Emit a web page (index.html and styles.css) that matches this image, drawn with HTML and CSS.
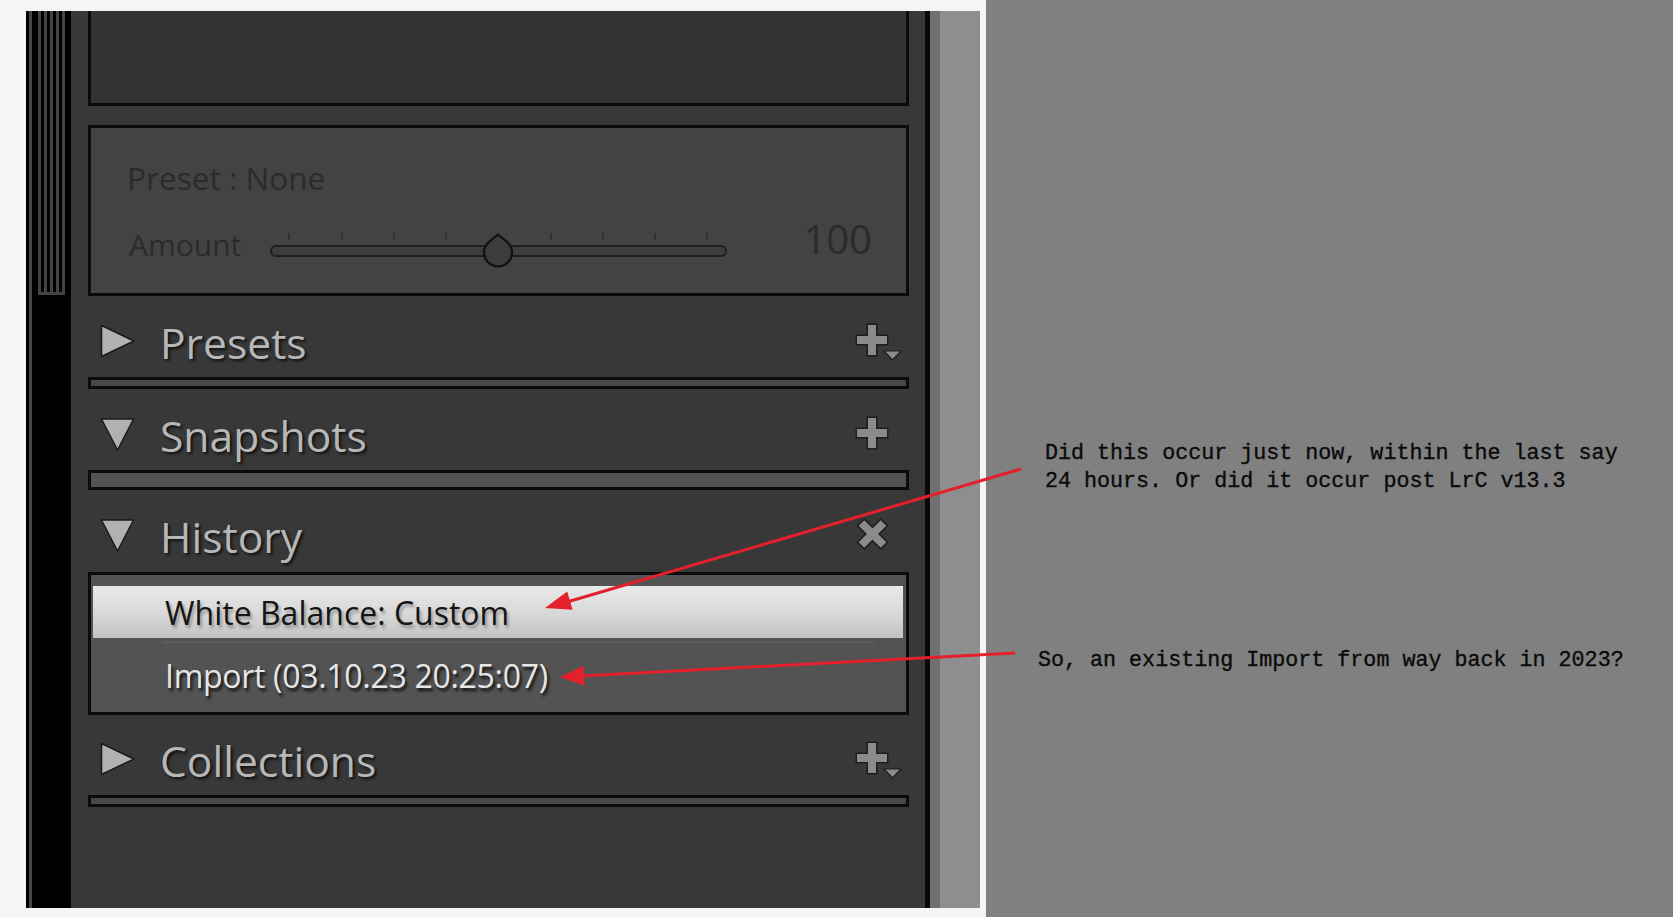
FILE: index.html
```html
<!DOCTYPE html>
<html lang="en">
<head>
<meta charset="utf-8">
<title>Lightroom History panel</title>
<link rel="stylesheet" href="styles.css">
</head>
<body>
<div class="page">
  <div class="shot-area">
    <div class="shot">
      <div class="strip">
        <div class="strip-line"></div>
        <div class="strip-grip"></div>
      </div>
      <div class="panel">
        <div class="topbox"></div>
        <div class="presetbox">
          <div class="preset-name">Preset : None</div>
          <div class="amount-row">
            <div class="amount-label">Amount</div>
            <div class="slider">
              <div class="ticks"><span></span><span></span><span></span><span></span><span></span><span></span><span></span><span></span><span></span></div>
              <div class="track"></div>
              <svg class="thumb" width="36" height="36" viewBox="0 0 36 36"><path d="M17 1.5 L25.8 8.6 A14 14 0 1 1 8.2 8.6 Z" fill="#3c3c3c" stroke="#111" stroke-width="2.2" stroke-linejoin="round"/></svg>
            </div>
            <div class="amount-value">100</div>
          </div>
        </div>

        <div class="header">
          <svg class="tri" width="36" height="36" viewBox="0 0 36 36"><polygon points="1.5,1.5 34,17 1.5,32.5" fill="#b1b1b1" stroke="#1a1a1a" stroke-width="1.5" stroke-linejoin="round"/></svg>
          <span class="title">Presets</span>
          <svg class="icon" width="48" height="40" viewBox="0 0 48 40"><path d="M18 1.5 V34.5 M1.5 18 H34.5" stroke="#1d1d1d" stroke-width="11"/><path d="M18 3 V33 M3 18 H33" stroke="#8b8b8b" stroke-width="8"/><polygon points="30,29 47,29 38.5,38" fill="#8b8b8b" stroke="#1d1d1d" stroke-width="1.2" stroke-linejoin="round"/></svg>
        </div>
        <div class="bar"></div>

        <div class="header">
          <svg class="tri" width="36" height="36" viewBox="0 0 36 36"><polygon points="1.5,2 33.5,2 17.5,33" fill="#b1b1b1" stroke="#1a1a1a" stroke-width="1.5" stroke-linejoin="round"/></svg>
          <span class="title">Snapshots</span>
          <svg class="icon" width="48" height="40" viewBox="0 0 48 40"><path d="M18 1.5 V34.5 M1.5 18 H34.5" stroke="#1d1d1d" stroke-width="11"/><path d="M18 3 V33 M3 18 H33" stroke="#8b8b8b" stroke-width="8"/></svg>
        </div>
        <div class="bar bar-thick"></div>

        <div class="header header-history">
          <svg class="tri" width="36" height="36" viewBox="0 0 36 36"><polygon points="1.5,2 33.5,2 17.5,33" fill="#b1b1b1" stroke="#1a1a1a" stroke-width="1.5" stroke-linejoin="round"/></svg>
          <span class="title">History</span>
          <svg class="icon" width="48" height="40" viewBox="0 0 48 40"><path d="M6.4 5.9 L30.6 30.1 M30.6 5.9 L6.4 30.1" stroke="#1d1d1d" stroke-width="11"/><path d="M7.5 7 L29.5 29 M29.5 7 L7.5 29" stroke="#8b8b8b" stroke-width="8"/></svg>
        </div>
        <div class="history">
          <div class="hist-item hist-selected">White Balance: Custom</div>
          <div class="hist-item hist-import"><div class="hist-inner">Import (03.10.23 20:25:07)</div></div>
        </div>

        <div class="header header-collections">
          <svg class="tri" width="36" height="36" viewBox="0 0 36 36"><polygon points="1.5,1.5 34,17 1.5,32.5" fill="#b1b1b1" stroke="#1a1a1a" stroke-width="1.5" stroke-linejoin="round"/></svg>
          <span class="title">Collections</span>
          <svg class="icon" width="48" height="40" viewBox="0 0 48 40"><path d="M18 1.5 V34.5 M1.5 18 H34.5" stroke="#1d1d1d" stroke-width="11"/><path d="M18 3 V33 M3 18 H33" stroke="#8b8b8b" stroke-width="8"/><polygon points="30,29 47,29 38.5,38" fill="#8b8b8b" stroke="#1d1d1d" stroke-width="1.2" stroke-linejoin="round"/></svg>
        </div>
        <div class="bar"></div>
      </div>
      <div class="edge-dark"></div>
      <div class="edge-mid"></div>
      <div class="edge-light"></div>
    </div>
  </div>

  <div class="notes">
    <p class="note note-first">Did this occur just now, within the last say
24 hours. Or did it occur post LrC v13.3</p>
    <p class="note note-second">So, an existing Import from way back in 2023?</p>
  </div>

  <svg class="arrows" width="1673" height="917" viewBox="0 0 1673 917">
    <line x1="1021" y1="469" x2="567" y2="602" stroke="#e3202b" stroke-width="3"/>
    <polygon points="545,608 572.6,609.8 567.2,591.6" fill="#e3202b"/>
    <line x1="1015" y1="653" x2="582" y2="676" stroke="#e3202b" stroke-width="3"/>
    <polygon points="560,677 584.5,685.7 583.5,665.7" fill="#e3202b"/>
  </svg>
</div>
</body>
</html>
```

FILE: styles.css
```css
* { box-sizing: border-box; }

html, body {
  margin: 0;
  padding: 0;
  width: 1673px;
  height: 917px;
  overflow: hidden;
  background: #808080;
}

.page {
  position: relative;
  display: flex;
  width: 1673px;
  height: 917px;
  font-family: "Open Sans", "Noto Sans", sans-serif;
}

.shot-area {
  width: 986px;
  height: 917px;
  background: #f5f5f5;
  padding: 11px 6px 9px 26px;
}

.shot {
  display: flex;
  height: 897px;
}

/* left filmstrip grip */
.strip {
  width: 45px;
  background: #000;
  display: flex;
  align-items: flex-start;
  padding-left: 3px;
}
.strip-line {
  width: 3px;
  height: 100%;
  background: #454545;
}
.strip-grip {
  margin-left: 6px;
  width: 27px;
  height: 284px;
  background: repeating-linear-gradient(to right, #434343 0 3px, #000 3px 6px);
  border-bottom: 3px solid #434343;
}

/* main panel */
.panel {
  width: 854px;
  background: #383838;
  padding: 0 16px 0 17px;
  display: flex;
  flex-direction: column;
}

.topbox {
  height: 95px;
  background: #333;
  border: 3px solid #0b0b0b;
  border-top: none;
}

.presetbox {
  margin-top: 19px;
  height: 171px;
  background: #434343;
  border: 3px solid #0b0b0b;
  padding: 34px 34px 0 36px;
  color: #2b2b2b;
}
.preset-name {
  font-size: 31.6px;
  line-height: 31px;
}
.amount-row {
  display: flex;
  align-items: flex-start;
  margin-top: 35px;
  margin-left: 2px;
}
.amount-label {
  font-size: 30px;
  line-height: 30px;
  margin-top: 2px;
}
.slider {
  position: relative;
  width: 457px;
  height: 36px;
  margin-left: 29px;
  margin-top: 5px;
}
.ticks {
  display: flex;
  justify-content: space-between;
  padding: 0 19px 0 18px;
  height: 7px;
}
.ticks span {
  width: 2px;
  height: 7px;
  background: #303030;
}
.track {
  margin-top: 5px;
  height: 12px;
  border: 2px solid #1e1e1e;
  border-radius: 6px;
  background: #3d3d3d;
}
.thumb {
  position: absolute;
  left: 211px;
  top: 0;
}
.amount-value {
  margin-left: auto;
  font-size: 40px;
  line-height: 40px;
  margin-top: -9px;
}

/* section headers */
.header {
  height: 81px;
  display: flex;
  align-items: center;
  padding: 10px 7px 0 12px;
}
.header-history { height: 82px; }
.header-collections { height: 80px; }
.tri { flex: none; }
.title {
  margin-left: 24px;
  font-size: 42.6px;
  line-height: 42px;
  color: #b7b7b7;
  text-shadow: 2px 2px 3px rgba(0, 0, 0, 0.75);
}
.icon {
  margin-left: auto;
  flex: none;
}

.bar {
  height: 12px;
  background: #484848;
  border: 3px solid #0b0b0b;
}
.bar-thick {
  height: 20px;
  background: #525252;
}

/* history list */
.history {
  height: 143px;
  background: #535353;
  border: 3px solid #0b0b0b;
  padding: 11px 3px 0 2px;
}
.hist-item {
  font-size: 32px;
  white-space: nowrap;
}
.hist-selected {
  height: 52px;
  line-height: 54px;
  padding-left: 72px;
  color: #151515;
  background: linear-gradient(to bottom, #e9e9e9 0%, #d6d6d6 60%, #c2c2c2 100%);
  text-shadow: 2px 3px 3px rgba(0, 0, 0, 0.3);
}
.hist-import {
  height: 74px;
  padding: 3px 28px 0 70px;
}
.hist-inner {
  border-top: 2px solid #5c5c5c;
  line-height: 66px;
  padding-left: 2px;
  letter-spacing: -0.3px;
  color: #e6e6e6;
  text-shadow: 2px 3px 3px rgba(0, 0, 0, 0.8);
}

/* right edge of the screenshot */
.edge-dark { width: 5px; background: #0a0a0a; }
.edge-mid { width: 10px; background: #707070; }
.edge-light { width: 40px; background: #8e8e8e; }

/* annotations */
.notes {
  flex: 1;
  background: #808080;
  padding-top: 440px;
}
.note {
  margin: 0;
  font-family: "Liberation Mono", "DejaVu Sans Mono", monospace;
  font-size: 21.7px;
  line-height: 28px;
  color: #0a0a0a;
  white-space: pre;
  -webkit-text-stroke: 0.35px #0a0a0a;
}
.note-first { margin-left: 59px; }
.note-second { margin-left: 52px; margin-top: 151px; }

.arrows {
  position: absolute;
  left: 0;
  top: 0;
  pointer-events: none;
}
```
